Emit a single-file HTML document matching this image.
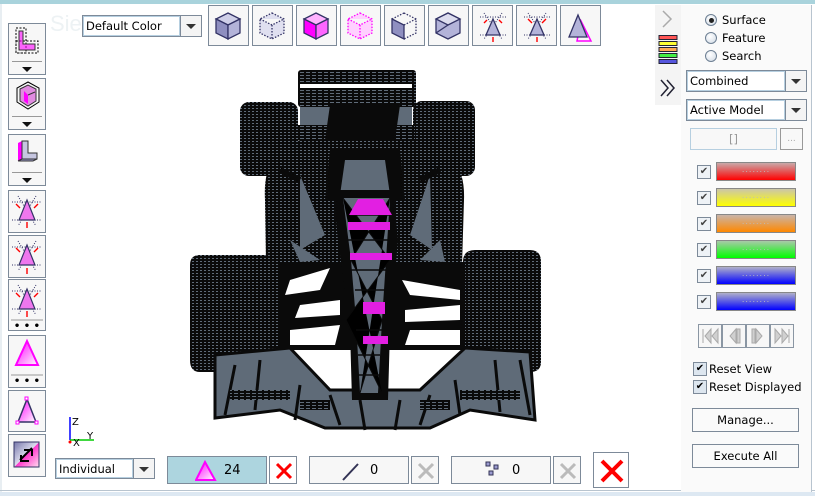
<!DOCTYPE html>
<html><head><meta charset="utf-8"><style>
*{box-sizing:border-box;margin:0;padding:0}
body{width:815px;height:496px;background:#fff;position:relative;overflow:hidden;font-family:"DejaVu Sans","Liberation Sans",sans-serif;font-size:11.5px;color:#000}
.a{position:absolute}
.btn{position:absolute;background:#f7f7f7;border:1px solid #7d8a99}
.combo{position:absolute;background:#fff;border:1px solid #7d8a99;font-size:11.5px}
.combo .t{position:absolute;left:0;top:0;bottom:0;right:21px;border:1px solid #b6cfe0;padding:2px 2px;line-height:15px}
.combo .d{position:absolute;right:0;top:0;bottom:0;width:21px;border-left:1px solid #7d8a99;background:#f4f4f4}
.combo .d:after{content:"";position:absolute;left:5px;top:8px;border-left:5px solid transparent;border-right:5px solid transparent;border-top:5px solid #333}
.sep{position:absolute;left:3px;right:3px;height:1px;background:#999}
.arr{position:absolute;left:13px;border-left:5px solid transparent;border-right:5px solid transparent;border-top:5px solid #111}
.cb{position:absolute;width:14px;height:14px;border:1px solid #7d8a99;background:#eef2f6;font-size:10px;line-height:12px;text-align:center;color:#444}
.bar{position:absolute;width:80px;height:19px;border:1px solid #888;text-align:center;font-size:8px;color:#bbb;line-height:14px;letter-spacing:1px}
.rad{position:absolute;width:12px;height:12px;border-radius:50%;border:1px solid #6d7f93;background:radial-gradient(circle at 40% 35%,#fff,#cfd9e4)}
</style></head><body>
<div class="a" style="left:0;top:0;width:815px;height:4px;background:#a9d3dc"></div>
<div class="a" style="left:0;top:4px;width:2px;height:488px;background:#e8eef2"></div>
<div class="a" style="left:0;top:490px;width:815px;height:1px;background:#b8c4cf"></div>
<div class="a" style="left:0;top:492px;width:815px;height:4px;background:#dde8f2"></div>
<div class="a" style="left:50px;top:11px;font-size:22px;color:#edf2f4;font-family:'Liberation Sans',sans-serif">Siemens</div>

<div class="combo" style="left:82px;top:15px;width:120px;height:22px"><div class="t">Default Color</div><div class="d"></div></div>

<svg class="a" style="left:208px;top:5px" width="394" height="42">
<g fill="#f7f7f7" stroke="#7d8a99">
<rect x="0.5" y="0.5" width="40" height="40"/><rect x="44.5" y="0.5" width="40" height="40"/><rect x="88.5" y="0.5" width="40" height="40"/><rect x="132.5" y="0.5" width="40" height="40"/><rect x="176.5" y="0.5" width="40" height="40"/><rect x="220.5" y="0.5" width="40" height="40"/><rect x="264.5" y="0.5" width="40" height="40"/><rect x="308.5" y="0.5" width="40" height="40"/><rect x="352.5" y="0.5" width="40" height="40"/>
</g>
<g stroke="#333366" stroke-width="1.3">
<g transform="translate(8,8)"><path d="M12 0L24 6L12 12L0 6Z" fill="#cfcfe8"/><path d="M0 6L12 12L12 26L0 20Z" fill="#8f8fc0"/><path d="M24 6L12 12L12 26L24 20Z" fill="#b3b3d9"/></g>
<g transform="translate(52,8)" stroke-dasharray="1.5 1.5"><path d="M12 0L24 6L24 20L12 26L0 20L0 6ZM12 12L12 26M0 6L12 12L24 6" fill="#e0e0f0"/></g>
<g transform="translate(96,8)"><path d="M12 0L24 6L12 12L0 6Z" fill="#ffb3ff"/><path d="M0 6L12 12L12 26L0 20Z" fill="#f0f"/><path d="M24 6L12 12L12 26L24 20Z" fill="#ff66ff"/></g>
<g transform="translate(140,8)" stroke="#f0f" stroke-dasharray="1.5 1.5"><path d="M12 0L24 6L24 20L12 26L0 20L0 6ZM12 12L12 26M0 6L12 12L24 6" fill="#ffd0ff"/></g>
<g transform="translate(184,8)"><path d="M0 6L12 12L12 26L0 20Z" fill="#8f8fc0"/><path d="M12 0L24 6L24 20L12 26M12 0L0 6M12 12L24 6" fill="none" stroke-dasharray="1.5 1.5"/></g>
<g transform="translate(228,8)"><path d="M12 0L24 6L24 20L12 26L0 20L0 6Z" fill="#b3b3d9"/><path d="M12 0L24 6L12 12L0 6Z" fill="#dcdcee"/><path d="M0 20L12 12" fill="none"/></g>
</g>
<g transform="translate(272,8)"><path d="M0 4H26M0 22H26M4 0L22 26M22 0L4 26" stroke="#336" stroke-dasharray="1 1.5" fill="none"/><path d="M13 6L20 22H6Z" fill="#b3b3d9" stroke="#333366" stroke-width="1.3"/><path d="M4 10L7 7M22 10L19 7M13 24V29" stroke="red" stroke-width="1.4"/></g>
<g transform="translate(316,8)"><path d="M0 4H26M0 22H26M4 0L22 26M22 0L4 26" stroke="#336" stroke-dasharray="1 1.5" fill="none"/><path d="M13 6L20 22H6Z" fill="#b3b3d9" stroke="#333366" stroke-width="1.3"/><path d="M4 6L8 10M22 6L18 10M13 29V24" stroke="red" stroke-width="1.4"/></g>
<g transform="translate(360,8)"><path d="M13 8L23 28H9Z" fill="none" stroke="#f0f" stroke-width="1.5"/><path d="M10 2L19 24H1Z" fill="#b3b3d9" stroke="#333366" stroke-width="1.3"/></g>
</svg>

<div class="btn" style="left:8px;top:23px;width:38px;height:52px"><svg class="a" style="left:6px;top:3px" width="26" height="28"><rect x="1" y="1" width="10" height="25" fill="none" stroke="#000" stroke-dasharray="2 1.5"/><rect x="1" y="14" width="22" height="12" fill="none" stroke="#000" stroke-dasharray="2 1.5"/><path d="M4 4H8V17H20V23H4Z" fill="#f0f" fill-opacity=".6" stroke="#333"/></svg><div class="sep" style="top:37px"></div><div class="arr" style="top:43px"></div></div>
<div class="btn" style="left:8px;top:78px;width:38px;height:52px"><svg class="a" style="left:6px;top:2px" width="26" height="30"><path d="M13 1L24 7V21L13 28L2 21V7Z" fill="none" stroke="#000"/><path d="M5 8L13 4L21 8V20L13 25L5 20Z" fill="#e08be0" stroke="#333"/><path d="M9 10V20L13 23V14Z" fill="#f0f"/><path d="M13 14L20 11" stroke="#333"/></svg><div class="sep" style="top:37px"></div><div class="arr" style="top:43px"></div></div>
<div class="btn" style="left:8px;top:134px;width:38px;height:52px"><svg class="a" style="left:6px;top:4px" width="26" height="28"><path d="M3 4L7 2V20L3 22Z" fill="#f0f"/><path d="M7 2H13V14H22V20H7Z" fill="#c6c6e0" stroke="#333"/><path d="M3 22H18L22 20H7L3 22" fill="#9b9bc8" stroke="#333"/></svg><div class="sep" style="top:37px"></div><div class="arr" style="top:43px"></div></div>
<svg class="a" style="left:8px;top:190px" width="39" height="290">
<g fill="#f7f7f7" stroke="#7d8a99"><rect x=".5" y=".5" width="37" height="42"/><rect x=".5" y="45.5" width="37" height="42"/><rect x=".5" y="89.5" width="37" height="51"/><rect x=".5" y="145.5" width="37" height="52"/><rect x=".5" y="200.5" width="37" height="41"/><rect x=".5" y="244.5" width="37" height="42"/></g>
<g stroke="#336" stroke-dasharray="1 1.5" fill="none"><path d="M4 12H34M4 30H34M10 6L28 36M28 6L10 36"/><path d="M4 57H34M4 75H34M10 51L28 81M28 51L10 81"/><path d="M4 101H34M4 119H34M10 95L28 125M28 95L10 125"/></g>
<g fill="#ee77ee" stroke="#333366" stroke-width="1.2"><path d="M19 10L27 30H11Z"/><path d="M19 55L27 75H11Z"/><path d="M19 99L27 119H11Z"/></g>
<g stroke="red" stroke-width="1.4" fill="none"><path d="M8 14L12 18M30 14L26 18M19 32V38"/><path d="M8 58L12 62M30 58L26 62M19 84V78"/><path d="M8 103L12 107M30 103L26 107M19 121V127"/></g>
<line x1="3" y1="130" x2="35" y2="130" stroke="#999"/><text x="19" y="139" font-size="10" text-anchor="middle" font-weight="bold">• • •</text>
<defs><linearGradient id="pg" x1="0" y1="0" x2="1" y2="1"><stop offset="0" stop-color="#f0f"/><stop offset="1" stop-color="#fff"/></linearGradient></defs>
<path d="M19 151L30 175H8Z" fill="url(#pg)" stroke="#f0f" stroke-width="2"/>
<line x1="3" y1="185" x2="35" y2="185" stroke="#999"/><text x="19" y="194" font-size="10" text-anchor="middle" font-weight="bold">• • •</text>
<path d="M19 209L28 232H10Z" fill="url(#pg)" stroke="#333366" stroke-width="1.5"/>
<g fill="#fff" stroke="#f0f"><rect x="17" y="207" width="3" height="3"/><rect x="8" y="231" width="3" height="3"/><rect x="27" y="231" width="3" height="3"/></g>
<defs><linearGradient id="sg" x1="0" y1="0" x2="1" y2="1"><stop offset="0" stop-color="#7777aa"/><stop offset="0.5" stop-color="#dcdcee"/><stop offset="0.5" stop-color="#f3c"/><stop offset="1" stop-color="#fde"/></linearGradient></defs>
<rect x="6" y="252" width="25" height="25" fill="url(#sg)" stroke="#336"/>
<path d="M12 270L24 258M16 260H24V266M13 265V271H21" stroke="#000" stroke-width="2" fill="none"/>
</svg>

<!-- car -->
<svg class="a" style="left:185px;top:65px" width="360" height="370" viewBox="185 65 360 370">
<defs><pattern id="m" width="4" height="3" patternUnits="userSpaceOnUse"><rect width="4" height="3" fill="#0a0a0a"/><rect width="2" height="1" fill="#5f6b78"/></pattern>
<pattern id="h" width="6" height="3" patternUnits="userSpaceOnUse"><rect width="6" height="3" fill="#0a0a0a"/><rect width="4" height="1" fill="#5f6b78"/></pattern></defs>
<!-- rear wing -->
<rect x="298" y="70" width="118" height="37" rx="3" fill="url(#h)"/>
<rect x="300" y="84" width="112" height="4" fill="#fff"/>
<!-- rear tires -->
<rect x="240" y="102" width="58" height="74" rx="9" fill="url(#m)"/>
<rect x="413" y="101" width="62" height="75" rx="9" fill="url(#m)"/>
<!-- rear structure -->
<path d="M300 107H412V170H300Z" fill="#5f6b78"/>
<path d="M298 125H415V140H298Z" fill="url(#h)"/>
<path d="M330 105L400 105L395 140L380 150L340 150L325 140Z" fill="#0a0a0a"/>
<!-- sidepods -->
<path d="M265 200Q262 150 300 140L420 140Q466 150 464 200L462 265L266 265Z" fill="url(#m)"/>
<path d="M300 175L325 235L300 250ZM430 175L410 235L432 250Z" fill="#5f6b78"/>
<path d="M280 170L300 180M440 170L420 180" stroke="#0a0a0a" stroke-width="6"/>
<!-- cockpit -->
<path d="M330 150H400L405 200H325Z" fill="#0a0a0a"/>
<path d="M345 160H385L390 195H340Z" fill="#5f6b78"/>
<!-- front tires -->
<path d="M190 265Q190 255 200 255H270Q280 255 280 268V360Q280 372 268 372H200Q190 372 190 360Z" fill="url(#m)"/>
<path d="M463 262Q463 250 475 250H530Q541 250 541 262V362Q541 372 530 372H475Q463 372 463 362Z" fill="url(#m)"/>
<!-- suspension area -->
<path d="M278 262H465V350H278Z" fill="#0a0a0a"/>
<path d="M290 280L330 268L320 290L285 295Z M300 305L340 300L340 315L295 318Z M290 330L340 325L335 345L290 345Z M402 280L460 290L460 300L410 295Z M405 310L460 305L460 320L405 322Z M410 330L460 330L460 345L405 345Z" fill="#fff"/>
<path d="M290 240L320 260L300 262ZM440 240L420 260L445 262Z" fill="#5f6b78"/>
<!-- front wing -->
<path d="M215 355L290 348L330 390H420L465 348L530 352L535 420L470 410L430 428H325L280 410L215 418Z" fill="#5f6b78"/>
<path d="M215 355L290 348L330 390H420L465 348L530 352L535 420L470 410L430 428H325L280 410L215 418Z" fill="none" stroke="#0a0a0a" stroke-width="3"/>
<path d="M235 365L225 415M260 360L255 410M300 385L295 420M330 395L340 425M360 400L365 430M400 400L395 430M430 395L420 425M455 380L460 415M495 360L500 412M520 360L530 415" stroke="#0a0a0a" stroke-width="3"/>
<path d="M230 395H290M460 395H520M300 405H330M420 405H450" stroke="url(#h)" stroke-width="10"/>
<!-- nose -->
<path d="M333 190H393L398 240L390 330L388 400H352L350 330L338 240Z" fill="#0a0a0a"/>
<path d="M343 198H390L386 260L382 320L378 393H360L356 320L351 260Z" fill="#5f6b78"/>
<path d="M343 198L390 260L346 320L382 393M390 198L351 260L382 320L360 393" stroke="#0a0a0a" stroke-width="1"/>
<path d="M350 215H390M348 240H392M350 270H388M355 290H385M356 330H383M358 355H380M359 375H380" stroke="#0a0a0a" stroke-width="1.5"/>
<g fill="#e21fe2"><path d="M358 199H383L392 215H349Z"/><rect x="348" y="222" width="42" height="8"/><rect x="350" y="253" width="42" height="7"/><rect x="363" y="302" width="22" height="12"/><rect x="363" y="336" width="25" height="8"/></g>
</svg>

<svg class="a" style="left:66px;top:414px" width="50" height="42"><line x1="4" y1="3" x2="4" y2="26" stroke="#00f" stroke-width="1.5"/><line x1="4" y1="26" x2="28" y2="26" stroke="#0c0" stroke-width="1.5"/><circle cx="4" cy="28" r="1.5" fill="red"/><text x="6" y="11" font-size="10">Z</text><text x="21" y="25" font-size="10">Y</text><text x="7" y="32" font-size="10">X</text></svg>

<div class="combo" style="left:55px;top:458px;width:100px;height:21px"><div class="t" style="line-height:14px">Individual</div><div class="d"></div></div>
<div class="btn" style="left:167px;top:456px;width:100px;height:28px;background:#add5df"><svg class="a" style="left:27px;top:3px" width="24" height="22"><path d="M10 2L20 20H1Z" fill="url(#pg)" stroke="#f0f" stroke-width="2"/></svg><span class="a" style="left:56px;top:6px;font-size:13px">24</span></div>
<div class="btn" style="left:269px;top:456px;width:28px;height:28px;background:#fff"><svg class="a" style="left:4px;top:4px" width="20" height="20"><path d="M3 3L17 17M17 3L3 17" stroke="#f00" stroke-width="3"/></svg></div>
<div class="btn" style="left:309px;top:456px;width:100px;height:28px"><svg class="a" style="left:30px;top:3px" width="22" height="22"><path d="M3 20L18 4" stroke="#335" stroke-width="2"/></svg><span class="a" style="left:60px;top:6px;font-size:13px">0</span></div>
<div class="btn" style="left:411px;top:456px;width:28px;height:28px"><svg class="a" style="left:4px;top:4px" width="20" height="20"><path d="M3 3L17 17M17 3L3 17" stroke="#bbb" stroke-width="3"/></svg></div>
<div class="btn" style="left:451px;top:456px;width:100px;height:28px"><svg class="a" style="left:33px;top:4px" width="22" height="20"><g fill="#9b9bd0" stroke="#335"><rect x="1" y="1" width="4" height="4"/><rect x="9" y="4" width="4" height="4"/><rect x="4" y="10" width="4" height="4"/></g></svg><span class="a" style="left:60px;top:6px;font-size:13px">0</span></div>
<div class="btn" style="left:553px;top:456px;width:28px;height:28px"><svg class="a" style="left:4px;top:4px" width="20" height="20"><path d="M3 3L17 17M17 3L3 17" stroke="#bbb" stroke-width="3"/></svg></div>
<div class="btn" style="left:593px;top:452px;width:36px;height:36px;background:#fff"><svg class="a" style="left:4px;top:4px" width="28" height="28"><path d="M4 4L24 24M24 4L4 24" stroke="#f00" stroke-width="4"/></svg></div>

<div class="a" style="left:655px;top:5px;width:26px;height:100px;background:#f4f4f4"></div>
<svg class="a" style="left:657px;top:8px" width="22" height="92"><path d="M6 3L14 11L6 19" stroke="#aaa" stroke-width="1.5" fill="none"/>
<g stroke="#223"><rect x="2" y="27.5" width="18" height="4" fill="#f55"/><rect x="2" y="33.5" width="18" height="4" fill="#ff3"/><rect x="2" y="39.5" width="18" height="4" fill="#fa5"/><rect x="2" y="45.5" width="18" height="4" fill="#4e4"/><rect x="2" y="51.5" width="18" height="4" fill="#55d"/></g>
<path d="M4 72L11 80L4 88M10 72L17 80L10 88" stroke="#223" stroke-width="1.5" fill="none"/></svg>
<div class="a" style="left:681px;top:5px;width:131px;height:487px;background:#fafafa;border-right:1px solid #b8c4cf"></div>
<div class="rad" style="left:705px;top:14px"><div class="a" style="left:3px;top:3px;width:5px;height:5px;border-radius:50%;background:#222"></div></div>
<div class="rad" style="left:705px;top:32px"></div>
<div class="rad" style="left:705px;top:50px"></div>
<div class="a" style="left:722px;top:13px;line-height:15px">Surface<br><span style="position:relative;top:3px">Feature</span><br><span style="position:relative;top:6px">Search</span></div>
<div class="combo" style="left:686px;top:70px;width:121px;height:22px"><div class="t">Combined</div><div class="d"></div></div>
<div class="combo" style="left:686px;top:99px;width:121px;height:22px"><div class="t">Active Model</div><div class="d"></div></div>
<div class="a" style="left:690px;top:128px;width:87px;height:22px;border:1px solid #b6cfe0;background:#f8f8f8;text-align:center;color:#999;line-height:20px">[]</div>
<div class="a" style="left:780px;top:128px;width:23px;height:22px;border:1px solid #999;background:#f8f8f8;text-align:center;color:#aaa;font-size:9px;line-height:20px">...</div>

<div class="cb" style="left:697px;top:165px">✔</div><div class="bar" style="left:716px;top:162px;background:linear-gradient(#c9a9a9,#f00)">........</div>
<div class="cb" style="left:697px;top:191px">✔</div><div class="bar" style="left:716px;top:188px;background:linear-gradient(#ccc6a9,#ff0)">........</div>
<div class="cb" style="left:697px;top:217px">✔</div><div class="bar" style="left:716px;top:214px;background:linear-gradient(#c9b4a9,#f80)">........</div>
<div class="cb" style="left:697px;top:243px">✔</div><div class="bar" style="left:716px;top:240px;background:linear-gradient(#a9c9a9,#0f0)">........</div>
<div class="cb" style="left:697px;top:269px">✔</div><div class="bar" style="left:716px;top:266px;background:linear-gradient(#b0b0c9,#00f)">........</div>
<div class="cb" style="left:697px;top:295px">✔</div><div class="bar" style="left:716px;top:292px;background:linear-gradient(#b0b0c9,#00f)">........</div>

<svg class="a" style="left:698px;top:324px" width="97" height="24"><g fill="#f7f7f7" stroke="#8a96a3"><rect x=".5" y=".5" width="23" height="23"/><rect x="24.5" y=".5" width="23" height="23"/><rect x="48.5" y=".5" width="23" height="23"/><rect x="72.5" y=".5" width="23" height="23"/></g>
<g fill="#d0d0d0" stroke="#aaa"><path d="M5 5V19M13 5L7 12L13 19ZM20 5L14 12L20 19Z"/><path d="M38 5L32 12L38 19Z"/><rect x="39" y="5" width="3" height="14"/><path d="M58 5L64 12L58 19Z"/><rect x="54" y="5" width="3" height="14"/><path d="M77 5L83 12L77 19ZM84 5L90 12L84 19ZM91 5V19"/></g></svg>

<div class="cb" style="left:693px;top:362px;background:#dde6ef;color:#000">✔</div><div class="a" style="left:709px;top:362px">Reset View</div>
<div class="cb" style="left:693px;top:380px;background:#dde6ef;color:#000">✔</div><div class="a" style="left:709px;top:380px">Reset Displayed</div>
<div class="btn" style="left:692px;top:408px;width:107px;height:24px;background:#fafafa;text-align:center;line-height:22px">Manage...</div>
<div class="btn" style="left:692px;top:444px;width:107px;height:24px;background:#fafafa;text-align:center;line-height:22px">Execute All</div>
</body></html>
